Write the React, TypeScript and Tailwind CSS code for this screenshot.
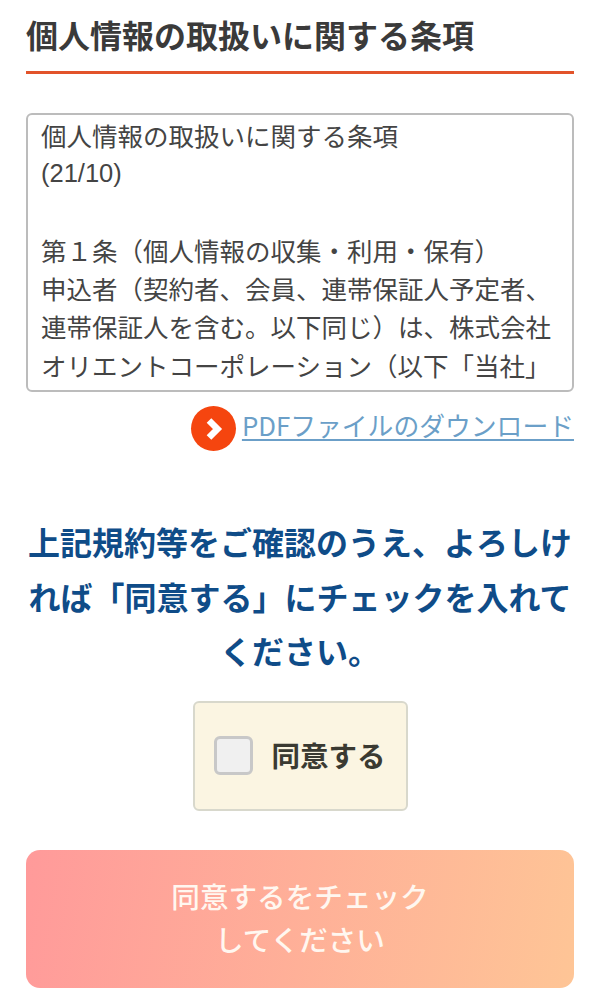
const font = "[font-family:'Noto_Sans_CJK_JP','Liberation_Sans',sans-serif]";

export default function App() {
	return (
		<div className={`w-[600px] h-[1003px] overflow-hidden bg-white px-[26px] ${font}`}>
			<h1 className="pt-[12px] pb-[15px] border-b-[3px] border-[#e2532a] text-[32px] leading-[44px] font-bold text-[#3a3a3a]">
				個人情報の取扱いに関する条項
			</h1>
			<div className="mt-[39px] h-[279px] overflow-hidden rounded-[6px] border-2 border-[#bcbcbc] pl-[13px] pr-[20px] pt-[1px] text-[25.5px] leading-[38.3px] text-[#444]">
				<p>個人情報の取扱いに関する条項</p>
				<p className="font-['Liberation_Sans',sans-serif]">(21/10)</p>
				<p>&nbsp;</p>
				<p>第１条（個人情報の収集・利用・保有）</p>
				<p>申込者（契約者、会員、連帯保証人予定者、</p>
				<p>連帯保証人を含む。以下同じ）は、株式会社</p>
				<p>オリエントコーポレーション（以下「当社」</p>
			</div>
			<div className="mt-[14px] flex items-start justify-end gap-[6px]">
				<span className="flex h-[45px] w-[45px] items-center justify-center rounded-full bg-[#f5450f]">
					<svg width="22" height="26" viewBox="0 0 22 26" className="translate-x-[2px]">
						<path d="M5 4.5 L13.5 13 L5 21.5" fill="none" stroke="white" strokeWidth="6.5" />
					</svg>
				</span>
				<a className="text-[25.8px] leading-[37px] text-[#6b9fc8] underline underline-offset-[3px]">
					PDFファイルのダウンロード
				</a>
			</div>
			<p className="mt-[63px] text-center text-[32px] leading-[54.5px] font-bold text-[#0f4c88]">
				上記規約等をご確認のうえ、よろしければ「同意する」にチェックを入れてください。
			</p>
			<div className="mt-[23px] flex justify-center">
				<label className="flex h-[110px] w-[215px] items-center gap-[19px] rounded-[6px] border-2 border-[#d8d8cc] bg-[#fbf5e2] pl-[19px]">
					<span className="h-[39px] w-[39px] rounded-[6px] border-[3px] border-[#c8c8c8] bg-[#f0f0f0]" />
					<span className="text-[28.5px] font-bold text-[#3a3a32]">同意する</span>
				</label>
			</div>
			<button
				type="button"
				className="mt-[39px] flex h-[138px] w-full flex-col items-center justify-center rounded-[14px] bg-[linear-gradient(100deg,#ff9a9a,#fec596)] pb-[4px] text-[28.6px] leading-[43px] font-medium text-[#fff7f0]">
				<span>同意するをチェック</span>
				<span>してください</span>
			</button>
		</div>
	);
}
